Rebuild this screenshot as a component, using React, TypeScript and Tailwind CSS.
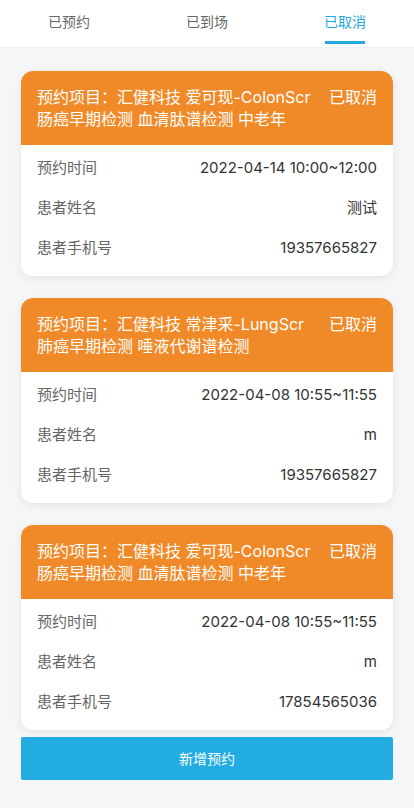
import React from "react";

const font = { fontFamily: 'Inter, "Noto Sans CJK SC", sans-serif' };

const tabs = ["已预约", "已到场", "已取消"];

const orders = [
	{
		line1: "预约项目：汇健科技 爱可现-ColonScr",
		line2: "肠癌早期检测 血清肽谱检测 中老年",
		time: "2022-04-14 10:00~12:00",
		name: "测试",
		phone: "19357665827",
	},
	{
		line1: "预约项目：汇健科技 常津采-LungScr",
		line2: "肺癌早期检测 唾液代谢谱检测",
		time: "2022-04-08 10:55~11:55",
		name: "m",
		phone: "19357665827",
	},
	{
		line1: "预约项目：汇健科技 爱可现-ColonScr",
		line2: "肠癌早期检测 血清肽谱检测 中老年",
		time: "2022-04-08 10:55~11:55",
		name: "m",
		phone: "17854565036",
	},
];

const Row = ({ label, value }: { label: string; value: string }) => (
	<div className="flex h-10 items-center justify-between text-[15px]">
		<span className="text-[#666]">{label}</span>
		<span className="text-[#333]">{value}</span>
	</div>
);

export default function App() {
	return (
		<div className="min-h-[808px] bg-[#f5f6f8]" style={font}>
			{/* tabs */}
			<div className="grid h-12 grid-cols-3 border-b border-[#eceef1] bg-white">
				{tabs.map((t, i) => (
					<div key={t} className="relative flex items-start justify-center pt-[11px]">
						<span className={"text-[14px] leading-[22px] " + (i === 2 ? "text-[#22a9e1]" : "text-[#666]")}>{t}</span>
						{i === 2 && <div className="absolute bottom-[3px] h-[3px] w-10 bg-[#22a9e1]" />}
					</div>
				))}
			</div>

			<div className="px-[21px] pt-[23px]">
				{orders.map((o, idx) => (
					<div
						key={idx}
						className="mb-[22px] overflow-hidden rounded-xl bg-white shadow-[0_2px_8px_rgba(0,0,0,0.08)]"
					>
						<div className="flex justify-between bg-[#f08a28] px-4 py-[15px] text-[16px] leading-[22px] text-white">
							<div>
								{o.line1}
								<br />
								{o.line2}
							</div>
							<div className="shrink-0">已取消</div>
						</div>
						<div className="px-4 pt-[3px] pb-[8px]">
							<Row label="预约时间" value={o.time} />
							<Row label="患者姓名" value={o.name} />
							<Row label="患者手机号" value={o.phone} />
						</div>
					</div>
				))}
			</div>

			<div className="px-[21px]">
				<button className="-mt-[15px] flex h-[43px] w-full items-center justify-center rounded-[2px] bg-[#23ace2] text-[14px] text-white">
					新增预约
				</button>
			</div>
		</div>
	);
}
